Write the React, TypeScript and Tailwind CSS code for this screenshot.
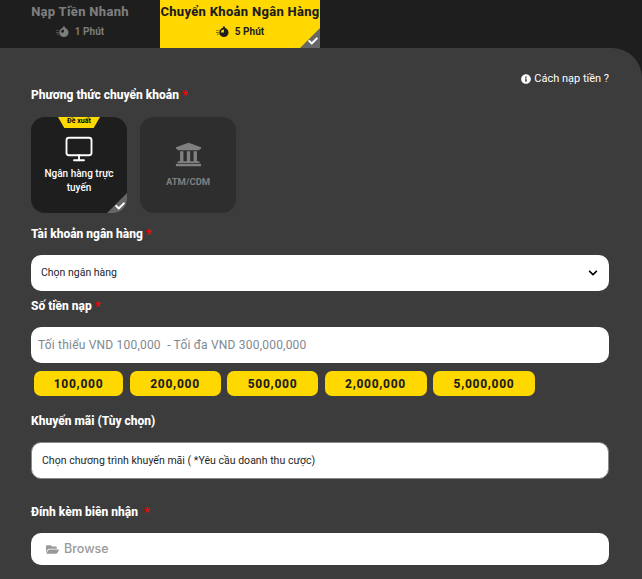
import { FaCheck, FaChevronDown, FaFolderOpen, FaInfoCircle, FaUniversity } from "react-icons/fa";
import { FiMonitor } from "react-icons/fi";

const amounts = [
  { label: "100,000", width: "w-[89px]" },
  { label: "200,000", width: "w-[91px]" },
  { label: "500,000", width: "w-[91px]" },
  { label: "2,000,000", width: "w-[102px]" },
  { label: "5,000,000", width: "w-[102px]" },
];

const Stopwatch = ({ className }: { className: string }) => (
  <svg viewBox="0 0 14 12" className={className} fill="currentColor">
    <path
      fillRule="evenodd"
      d="M8.5 1.5a5 5 0 1 1 0 10 5 5 0 0 1 0-10zM8.5 3.4a3.1 3.1 0 0 0-3.1 3.1h3.1z"
    />
    <path d="M7.4 0h2.2v1.6H7.4z" />
    <path d="M0 4h3.6v1H0zM0 6h3v1H0zM1 8h2.4v1H1z" opacity="0.55" />
  </svg>
);

const Corner = () => (
  <div className="absolute bottom-0 right-0 flex h-5 w-5 items-end justify-end bg-[#666666] pb-[2px] pr-[2px] text-white [clip-path:polygon(100%_0,100%_100%,0_100%)]">
    <FaCheck className="h-[10px] w-[10px]" />
  </div>
);

const Required = () => <span className="text-[#ff0000]">*</span>;

const Label = ({ children }: { children: React.ReactNode }) => (
  <div className="text-[12px] font-extrabold leading-4 text-white">{children}</div>
);

export default function App() {
  return (
    <div className="h-[579px] w-[642px] overflow-hidden bg-[#1e1e1e] font-['Roboto',sans-serif]">
      {/* Tabs */}
      <div className="flex h-12">
        <div className="flex w-40 flex-col items-center pt-[3px] text-[#7d7d7d]">
          <div className="text-[13px] font-extrabold leading-[18px] tracking-[0.3px]">Nạp Tiền Nhanh</div>
          <div className="mt-[3px] flex items-center gap-[6px] text-[10px] font-bold leading-4">
            <Stopwatch className="h-[12px] w-[13px]" />
            1 Phút
          </div>
        </div>
        <div className="relative flex w-40 flex-col items-center bg-[#ffd800] pt-[3px] text-[#1e1e1e]">
          <div className="whitespace-nowrap text-[13px] font-extrabold leading-[18px] tracking-[0.3px]">Chuyển Khoản Ngân Hàng</div>
          <div className="mt-[3px] flex items-center gap-[6px] text-[10px] font-bold leading-4">
            <Stopwatch className="h-[12px] w-[13px]" />
            5 Phút
          </div>
          <Corner />
        </div>
      </div>

      {/* Form panel */}
      <div className="h-[531px] rounded-tr-[30px] bg-[#3c3c3c] pl-[31px] pr-[33px]">
        <div className="flex justify-end pt-[23px]">
          <div className="flex items-center gap-[3px] text-[11px] leading-4 text-white">
            <FaInfoCircle className="h-[10px] w-[10px]" />
            Cách nạp tiền ?
          </div>
        </div>

        <Label>
          Phương thức chuyển khoản <Required />
        </Label>

        <div className="mt-[14px] flex gap-[13px]">
          <div className="relative flex h-24 w-24 flex-col items-center overflow-hidden rounded-[14px] bg-[#1e1e1e] text-white">
            <div className="absolute left-[27px] top-0 h-[11px] w-[42px] bg-[#ffd800] text-center text-[7px] font-bold leading-[9px] text-black [clip-path:polygon(0_0,100%_0,85%_100%,15%_100%)]">
              Đề xuất
            </div>
            <FiMonitor className="mt-[17px] h-[30px] w-[30px] [stroke-width:1.5]" />
            <div className="mt-[3px] text-center text-[10px] font-medium leading-[14px]">
              Ngân hàng trực tuyến
            </div>
            <Corner />
          </div>
          <div className="flex h-24 w-24 flex-col items-center rounded-[14px] bg-[#2e2e2e] text-[#808080]">
            <FaUniversity className="mt-[24px] h-[27px] w-[27px]" />
            <div className="mt-[7px] text-[9.5px] font-bold leading-[14px]">ATM/CDM</div>
          </div>
        </div>

        <div className="mt-[13px]">
          <Label>
            Tài khoản ngân hàng <Required />
          </Label>
        </div>
        <div className="mt-[13px] flex h-9 items-center justify-between rounded-[10px] bg-white pl-[10px] pr-[11px] text-[10.5px] text-[#212529]">
          Chọn ngân hàng
          <FaChevronDown className="h-[10px] w-[10px] text-black" />
        </div>

        <div className="mt-[7px]">
          <Label>
            Số tiền nạp <Required />
          </Label>
        </div>
        <div className="mt-[13px] flex h-9 items-center rounded-[10px] bg-white pl-[7px] text-[12px] tracking-[0.2px] text-[#808890]">
          Tối thiểu VND 100,000&nbsp; - Tối đa VND 300,000,000
        </div>

        <div className="ml-[3px] mt-2 flex gap-[6.5px]">
          {amounts.map((a) => (
            <div
              key={a.label}
              className={`${a.width} flex h-[25px] items-center justify-center rounded-[7px] bg-[#ffd800] text-[12px] font-extrabold tracking-[0.7px] text-[#1e1e1e]`}
            >
              {a.label}
            </div>
          ))}
        </div>

        <div className="mt-[17px]">
          <Label>Khuyến mãi (Tùy chọn)</Label>
        </div>
        <div className="mt-[13px] flex h-[37px] items-center rounded-[10px] border border-[#8a8a8a] bg-white pl-[10px] text-[10.5px] tracking-[0.03px] text-[#212529]">
          Chọn chương trình khuyến mãi ( *Yêu cầu doanh thu cược)
        </div>

        <div className="mt-[25px]">
          <Label>
            Đính kèm biên nhận <span className="ml-[3px]"></span>
            <Required />
          </Label>
        </div>
        <div className="mt-[13px] flex h-8 items-center gap-[5px] rounded-[10px] bg-white pl-[15px] font-['Inter',sans-serif] text-[12.5px] font-medium text-[#999999]">
          <FaFolderOpen className="h-[13px] w-[13px]" />
          Browse
        </div>
      </div>
    </div>
  );
}
